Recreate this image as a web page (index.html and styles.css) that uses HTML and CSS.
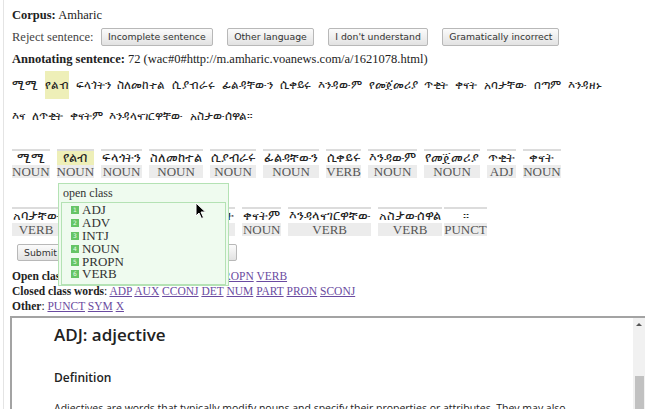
FILE: index.html
```html
<!DOCTYPE html>
<html>
<head>
<meta charset="utf-8">
<link rel="stylesheet" href="styles.css">
</head>
<body>
<div class="page">
  <div class="line"><b>Corpus:</b> Amharic</div>
  <div class="line reject">
    <span class="reject-label">Reject sentence:</span>
    <button class="btn">Incomplete sentence</button>
    <button class="btn">Other language</button>
    <button class="btn">I don't understand</button>
    <button class="btn">Gramatically incorrect</button>
  </div>
  <div class="line"><b>Annotating sentence:</b> 72 (wac#0#http://m.amharic.voanews.com/a/1621078.html)</div>

  <p class="sentence"><span>ሚሚ</span> <span class="hl">የልብ</span> <span>ፍላጎትን</span> <span>ስለመከተል</span> <span>ሲያብራሩ</span> <span>ፊልዳቸውን</span> <span>ሲቀይሩ</span> <span>እንዳውም</span> <span>የመጀመሪያ</span> <span>ጥቂት</span> <span>ቀናት</span> <span>አባታቸው</span> <span>በጣም</span> <span>እንዳዘኑ</span> <span>እና</span> <span>ለጥቂት</span> <span>ቀናትም</span> <span>እንዳላናገርዋቸው</span> <span>አስታውሰዋል</span><span>።</span></p>

  <div class="tokens">
    <div class="tok-row">
      <div class="tok"><div class="w">ሚሚ</div><div class="pos">NOUN</div></div>
      <div class="tok sel"><div class="w">የልብ</div><div class="pos">NOUN</div></div>
      <div class="tok"><div class="w">ፍላጎትን</div><div class="pos">NOUN</div></div>
      <div class="tok"><div class="w">ስለመከተል</div><div class="pos">NOUN</div></div>
      <div class="tok"><div class="w">ሲያብራሩ</div><div class="pos">NOUN</div></div>
      <div class="tok"><div class="w">ፊልዳቸውን</div><div class="pos">NOUN</div></div>
      <div class="tok"><div class="w">ሲቀይሩ</div><div class="pos">VERB</div></div>
      <div class="tok"><div class="w">እንዳውም</div><div class="pos">NOUN</div></div>
      <div class="tok"><div class="w">የመጀመሪያ</div><div class="pos">NOUN</div></div>
      <div class="tok"><div class="w">ጥቂት</div><div class="pos">ADJ</div></div>
      <div class="tok"><div class="w">ቀናት</div><div class="pos">NOUN</div></div>
    </div>
    <div class="tok-row">
      <div class="tok"><div class="w">አባታቸው</div><div class="pos">VERB</div></div>
      <div class="tok"><div class="w">በጣም</div><div class="pos">ADV</div></div>
      <div class="tok"><div class="w">እንዳዘኑ</div><div class="pos">VERB</div></div>
      <div class="tok"><div class="w">እና</div><div class="pos">CCONJ</div></div>
      <div class="tok"><div class="w">ለጥቂት</div><div class="pos">ADJ</div></div>
      <div class="tok"><div class="w">ቀናትም</div><div class="pos">NOUN</div></div>
      <div class="tok"><div class="w">እንዳላናገርዋቸው</div><div class="pos">VERB</div></div>
      <div class="tok"><div class="w">አስታውሰዋል</div><div class="pos">VERB</div></div>
      <div class="tok tight"><div class="w">።</div><div class="pos">PUNCT</div></div>
    </div>
  </div>

  <div class="actions">
    <button class="btn">Submit</button>
    <button class="btn wide">Submit and go to next sentence</button>
  </div>

  <div class="legend">
    <div><b>Open class words</b>: <a href="#">ADJ</a> <a href="#">ADV</a> <a href="#">INTJ</a> <a href="#">NOUN</a> <a href="#">PROPN</a> <a href="#">VERB</a></div>
    <div><b>Closed class words</b>: <a href="#">ADP</a> <a href="#">AUX</a> <a href="#">CCONJ</a> <a href="#">DET</a> <a href="#">NUM</a> <a href="#">PART</a> <a href="#">PRON</a> <a href="#">SCONJ</a></div>
    <div><b>Other</b>: <a href="#">PUNCT</a> <a href="#">SYM</a> <a href="#">X</a></div>
  </div>

  <div class="docframe">
    <div class="doc">
      <h1>ADJ: adjective</h1>
      <h2>Definition</h2>
      <p>Adjectives are words that typically modify nouns and specify their properties or attributes. They may also</p>
    </div>
    <div class="scrollbar">
      <div class="arrow"></div>
      <div class="thumb"></div>
    </div>
  </div>

  <div class="popup">
    <div class="popup-title">open class</div>
    <ul class="popup-list">
      <li><span class="key">1</span>ADJ</li>
      <li><span class="key">2</span>ADV</li>
      <li><span class="key">3</span>INTJ</li>
      <li><span class="key">4</span>NOUN</li>
      <li><span class="key">5</span>PROPN</li>
      <li><span class="key">6</span>VERB</li>
    </ul>
  </div>

  <svg class="cursor" width="12" height="18" viewBox="0 0 12 18">
    <path d="M1 1 L1 14 L4 11 L6.5 16.5 L8.5 15.5 L6 10 L10.5 10 Z" fill="#000" stroke="#fff" stroke-width="1"/>
  </svg>
</div>
</body>
</html>
```

FILE: styles.css
```css
* { box-sizing: border-box; }
html, body { margin: 0; padding: 0; background: #fff; }
body {
  font-family: "Liberation Serif", "DejaVu Sans", serif;
  font-size: 12.5px;
  color: #222;
}
.page {
  position: relative;
  margin-left: 3px;
  border-left: 1px solid #e4e4e4;
  padding: 4px 0 0 8px;
  height: 409px;
  overflow: hidden;
}
.line {
  height: 22px;
  line-height: 22px;
  white-space: nowrap;
}
.reject {
  display: flex;
  align-items: center;
  gap: 14.5px;
}
.reject-label { color: #444; margin-right: -7px; }
.btn {
  font-family: "DejaVu Sans", sans-serif;
  font-size: 9.3px;
  color: #333;
  height: 18px;
  padding: 0 6px;
  border: 1px solid #b8b8b8;
  border-radius: 2px;
  background: linear-gradient(#fbfbfb, #e2e2e2);
  line-height: 16px;
  margin: 0;
}
.sentence {
  margin: 0;
  line-height: 31px;
  font-family: "DejaVu Sans", sans-serif;
  font-size: 12px;
  color: #222;
  word-spacing: 3px;
  width: 592px;
}
.hl { background: #eeefb8; padding: 7px 0; }
.tokens {
  margin-top: 17px;
  display: flex;
  flex-direction: column;
  gap: 29px;
}
.tok-row {
  display: flex;
  gap: 7px;
}
.tok {
  border-top: 2px solid #dcdcdc;
  text-align: center;
}
.tok.tight { margin-left: -5px; }
.tok .w {
  font-family: "DejaVu Sans", sans-serif;
  font-size: 12.5px;
  line-height: 14px;
  padding: 0 1px;
  white-space: nowrap;
}
.tok.sel .w { background: #eeefb8; }
.tok .pos {
  background: #ececec;
  color: #555;
  font-family: "Liberation Serif", serif;
  font-size: 13px;
  line-height: 13px;
}
.actions {
  margin-top: 8px;
  display: flex;
  gap: 6px;
  padding-left: 5px;
}
.actions .btn { height: 17px; line-height: 15px; }
.actions .wide { padding: 0 8px; }
.legend {
  margin-top: 8px;
  font-size: 11.5px;
  line-height: 15px;
}
.legend a { color: #6a4aa0; }
.docframe {
  margin: 2px 0 0 -2px;
  width: 635px;
  height: 120px;
  border-top: 2px solid #a3a3a3;
  border-left: 2px solid #a3a3a3;
  display: flex;
}
.doc {
  flex: 1;
  padding: 2px 0 0 42px;
  font-family: "Open Sans", "DejaVu Sans", sans-serif;
  color: #222;
}
.doc h1 {
  margin: 0;
  font-size: 17px;
  font-weight: 600;
  line-height: 30px;
}
.doc h2 {
  margin: 20px 0 0;
  font-size: 12px;
  font-weight: 600;
  line-height: 16px;
}
.doc p {
  margin: 14px 0 0;
  font-size: 10.5px;
  line-height: 16px;
}
.scrollbar {
  width: 12px;
  background: #f1f1f1;
  position: relative;
}
.arrow {
  margin: 5px auto 0;
  width: 0; height: 0;
  border-left: 3px solid transparent;
  border-right: 3px solid transparent;
  border-bottom: 3px solid #555;
}
.thumb {
  position: absolute;
  left: 2px; right: 1px;
  top: 58px; height: 40px;
  background: #c1c1c1;
}
.popup {
  position: absolute;
  left: 54px;
  top: 183px;
  width: 171px;
  height: 103px;
  background: #effbef;
  border: 1px solid #b4e2b4;
  padding: 2px;
}
.popup-title {
  font-family: "Liberation Serif", serif;
  font-size: 12px;
  line-height: 14px;
  color: #333;
  padding-left: 2px;
}
.popup-list {
  list-style: none;
  margin: 2px 0 0;
  padding: 1px 0 0 9px;
  border: 1px solid #b4e2b4;
  height: 83px;
}
.popup-list li {
  display: flex;
  align-items: center;
  height: 12.8px;
  font-family: "Liberation Serif", serif;
  font-size: 13px;
  color: #333;
}
.key {
  display: inline-block;
  width: 8px; height: 8px;
  background: #66c466;
  color: #e8ffe8;
  font-family: "DejaVu Sans", sans-serif;
  font-size: 6px;
  line-height: 8px;
  text-align: center;
  margin-right: 3px;
}
.cursor {
  position: absolute;
  left: 191px;
  top: 202px;
}
```
